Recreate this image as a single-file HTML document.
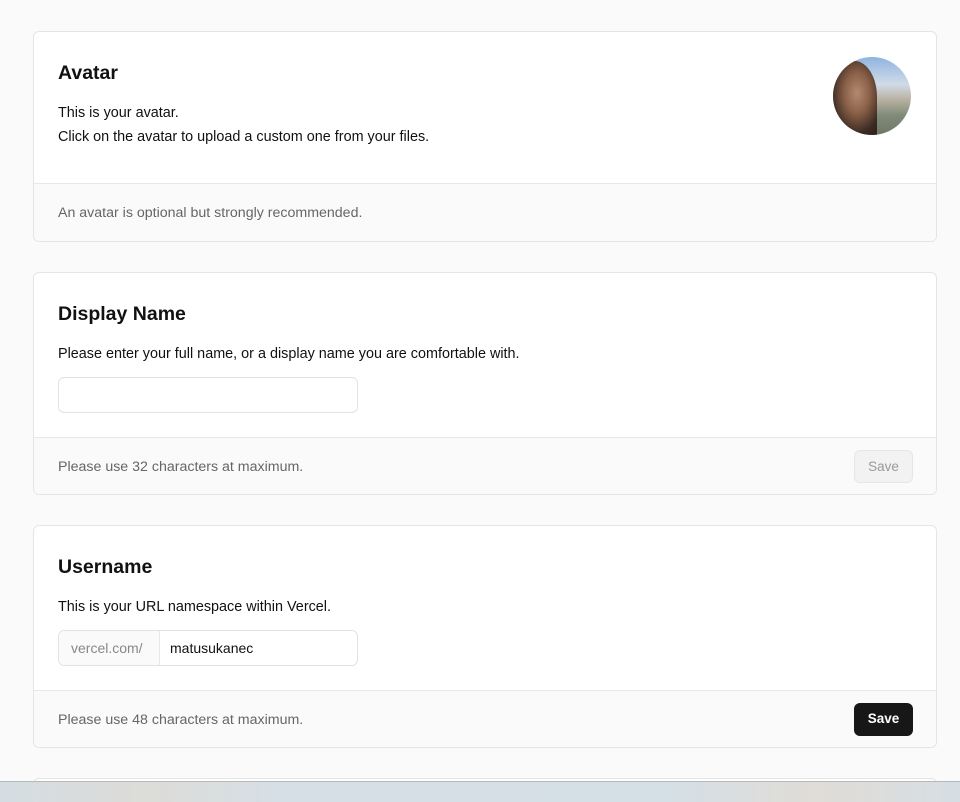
<!DOCTYPE html>
<html style="overflow:hidden;height:802px"><head><style>
*{box-sizing:border-box;margin:0;padding:0}
body{width:960px;height:802px;background:#fafafa;font-family:"Liberation Sans",sans-serif;color:#111;position:relative;overflow:hidden}
.card{position:absolute;left:33px;width:904px;background:#fff;border:1px solid #e5e5e5;border-radius:6px;overflow:hidden}
h2{font-size:19.5px;font-weight:bold;position:absolute;left:24px}
p{font-size:14.4px;position:absolute;left:24px}
.foot{position:absolute;left:0;right:0;bottom:0;height:57px;background:#fafafa;border-top:1px solid #e8e8e8;font-size:14.2px;color:#666;padding:0 24px;line-height:58px}
.btn{position:absolute;right:23px;top:12px;width:59px;height:33px;border-radius:6px;font-size:13.5px;font-weight:bold;text-align:center;line-height:32px}
.input{position:absolute;left:24px;width:300px;height:36px;border:1px solid #e3e3e3;border-radius:6px;background:#fff;font-size:14px}
</style></head><body>
<div class="card" style="top:31px;height:211px">
<h2 style="top:30px">Avatar</h2>
<p style="top:73px">This is your avatar.</p>
<p style="top:97px">Click on the avatar to upload a custom one from your files.</p>
<div style="position:absolute;left:799px;top:25px;width:78px;height:78px;border-radius:50%;overflow:hidden;background:linear-gradient(180deg,#8fb4e0 0%,#d0dbe8 35%,#b8b0a0 55%,#7f8a78 75%,#6f7868 100%)">
<div style="position:absolute;left:-6px;top:4px;width:50px;height:80px;border-radius:45% 45% 0 0;background:radial-gradient(ellipse at 60% 40%,#b48a70 0,#8a6048 30%,#3a2a22 60%,#1b1816 100%)"></div>
</div>
<div class="foot" style="height:58px">An avatar is optional but strongly recommended.</div>
</div>
<div class="card" style="top:272px;height:223px">
<h2 style="top:30px">Display Name</h2>
<p style="top:73px">Please enter your full name, or a display name you are comfortable with.</p>
<div class="input" style="top:104px"></div>
<div class="foot">Please use 32 characters at maximum.<div class="btn" style="background:#f2f2f2;border:1px solid #e6e6e6;color:#999;font-weight:normal">Save</div></div>
</div>
<div class="card" style="top:525px;height:223px">
<h2 style="top:30px">Username</h2>
<p style="top:73px">This is your URL namespace within Vercel.</p>
<div class="input" style="top:104px;display:flex;overflow:hidden">
<div style="width:101px;background:#fafafa;border-right:1px solid #e8e8e8;color:#888;line-height:34px;padding-left:12px">vercel.com/</div>
<div style="line-height:34px;padding-left:10px;color:#111">matusukanec</div>
</div>
<div class="foot">Please use 48 characters at maximum.<div class="btn" style="background:#171717;color:#fff">Save</div></div>
</div>
<div class="card" style="top:778px;height:24px;border-radius:6px 6px 0 0"></div>
<div style="position:absolute;left:0;top:781px;width:960px;height:21px;border-top:1px solid #b8b8b8;background:linear-gradient(90deg,#d5dde2 0%,#dcdcd8 15%,#d6dfe6 30%,#d5dfe6 70%,#e0dcd6 85%,#d6dee4 100%)"></div>
</body></html>
